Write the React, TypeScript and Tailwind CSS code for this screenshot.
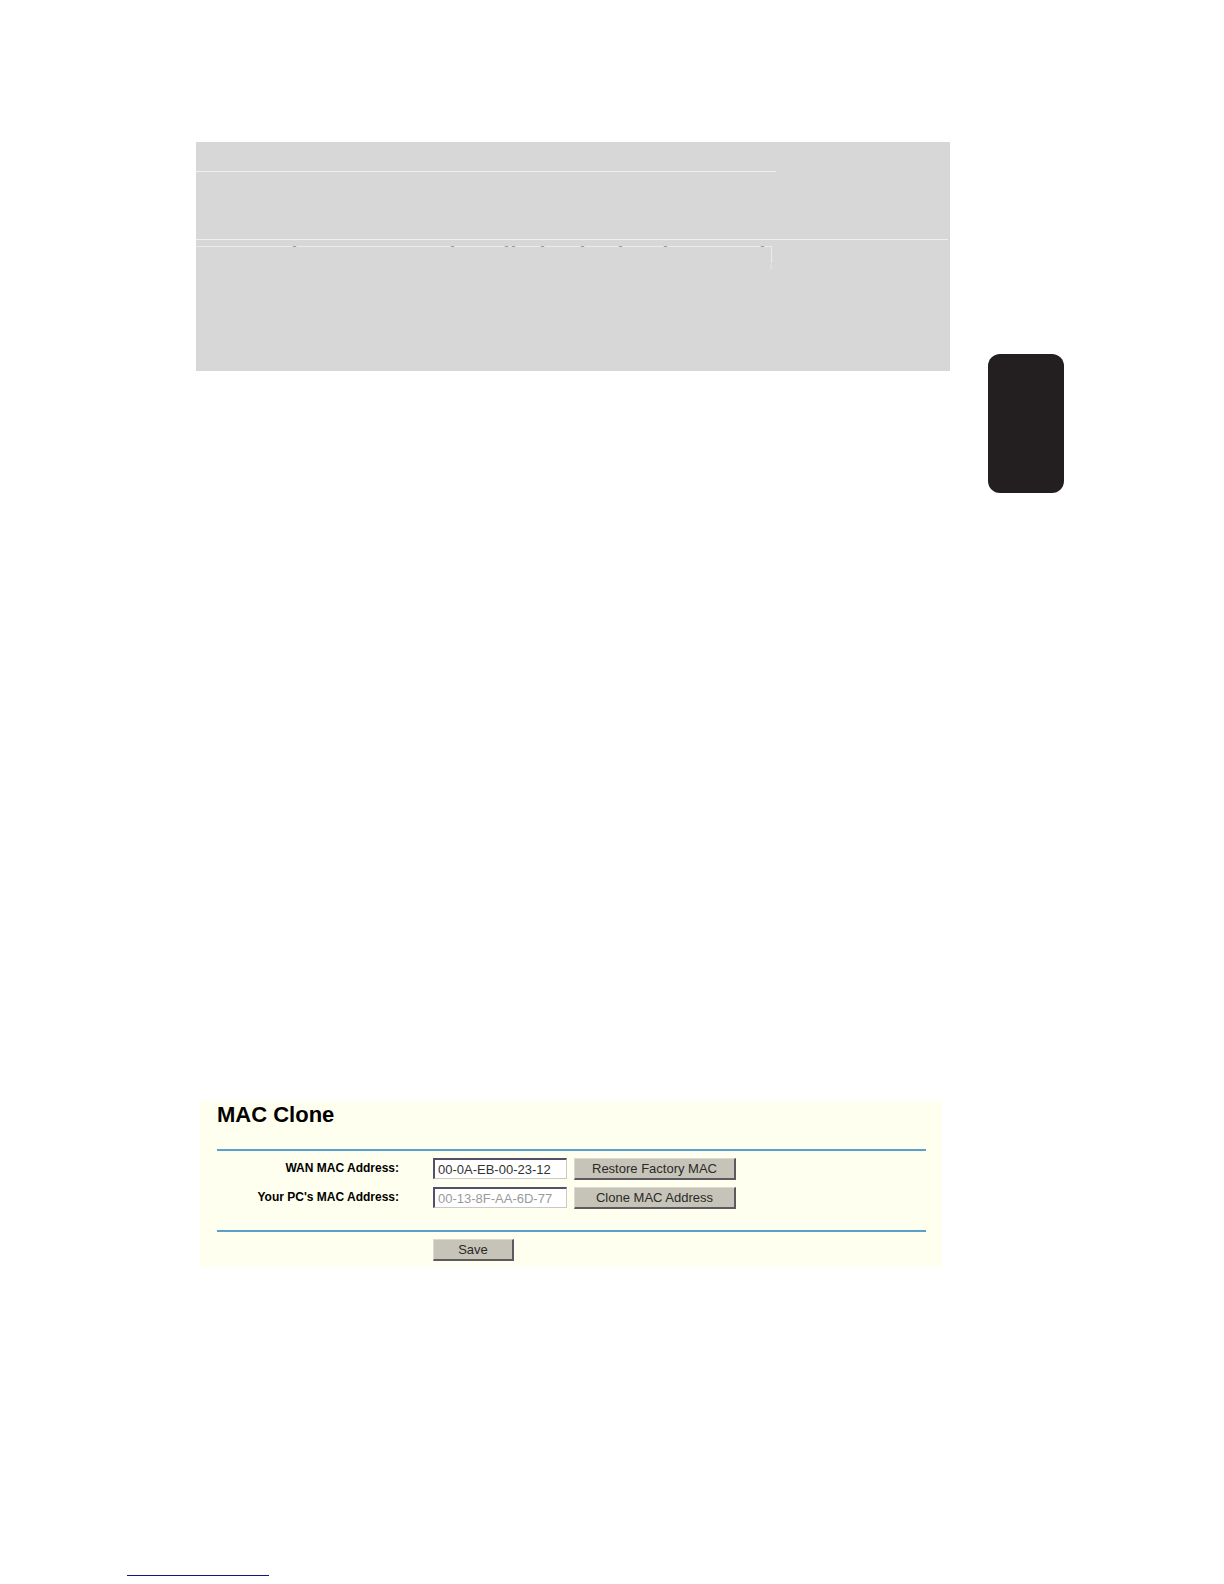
import React, { useState } from 'react';

const FACTORY_MAC = '00-0A-EB-00-23-12';
const PC_MAC = '00-13-8F-AA-6D-77';

// x positions of the small descender marks along the third rule
const MARKS = [98, 256, 310, 317, 346, 386, 424, 469, 566];

const BUTTON =
  'h-[22px] border-t border-l border-r-2 border-b-2 border-t-[#dcdad0] border-l-[#dcdad0] border-r-[#5c5a5e] border-b-[#5c5a5e] bg-[#c6c4b8] text-[13px] leading-[18px] text-[#2a2a28]';

const INPUT =
  'h-[21px] w-[134px] border-t-2 border-l-2 border-r border-b border-t-[#55506a] border-l-[#55506a] border-r-[#c9c8cc] border-b-[#c9c8cc] bg-white pl-[3px] text-[13px] leading-[18px] outline-none';

const NotePanel = () => (
  <section className="flex h-[229px] flex-1 flex-col bg-[#d7d7d7]">
    <div className="mr-[174px] h-[30px] border-b border-[#f0f0f0]" />
    <div className="mr-[2px] h-[68px] border-b border-[#f0f0f0]" />
    <svg className="mt-[5px] h-[26px] w-[576px]" viewBox="0 0 576 26" aria-hidden="true">
      <rect x="0" y="1" width="576" height="1" fill="#ebebeb" />
      <rect x="575" y="1" width="1" height="17" fill="#ebebeb" />
      <rect x="574" y="19" width="2" height="6" fill="#dedede" />
      {MARKS.map((x) => (
        <g key={x}>
          <rect x={x - 2} y="1" width="5" height="1" fill="#d7d7d7" />
          <rect x={x - 1} y="1" width="3" height="1" fill="#a0a0a0" />
        </g>
      ))}
    </svg>
  </section>
);

const MacCloneForm = () => {
  const [wanMac, setWanMac] = useState(FACTORY_MAC);

  return (
    <form
      onSubmit={(e) => e.preventDefault()}
      className="mt-[608px] mr-[122px] ml-1 bg-[#feffee] pt-[2px] pr-4 pb-[6px] pl-[17px]"
    >
      <h1 className="h-[46px] text-[22px] leading-6 font-bold text-black">MAC Clone</h1>

      <div className="flex h-[83px] flex-col gap-[7px] border-y-2 border-[#5aa0cc] pt-[7px]">
        <div className="flex h-[22px]">
          <label htmlFor="wan-mac" className="mr-[34px] w-[182px] text-right text-[12px] leading-5 font-bold text-black">
            WAN MAC Address:
          </label>
          <input
            id="wan-mac"
            type="text"
            value={wanMac}
            onChange={(e) => setWanMac(e.target.value)}
            className={`${INPUT} text-[#333333]`}
          />
          <button type="button" onClick={() => setWanMac(FACTORY_MAC)} className={`${BUTTON} ml-[7px] w-[162px]`}>
            Restore Factory MAC
          </button>
        </div>
        <div className="flex h-[22px]">
          <label htmlFor="pc-mac" className="mr-[34px] w-[182px] text-right text-[12px] leading-5 font-bold text-black">
            Your PC's MAC Address:
          </label>
          <input id="pc-mac" type="text" value={PC_MAC} disabled className={`${INPUT} text-[#9a9a9a]`} />
          <button type="button" onClick={() => setWanMac(PC_MAC)} className={`${BUTTON} ml-[7px] w-[162px]`}>
            Clone MAC Address
          </button>
        </div>
      </div>

      <button type="submit" className={`${BUTTON} mt-[7px] ml-[216px] block w-[81px]`}>
        Save
      </button>
    </form>
  );
};

const App = () => {
  return (
    <div className="bg-white font-['Liberation_Sans',Arial,sans-serif]">
      <main className="pt-[142px] pr-[160px] pl-[196px]">
        <div className="flex items-start gap-[38px]">
          <NotePanel />
          {/* Chapter thumb tab */}
          <aside className="mt-[212px] h-[139px] w-[76px] rounded-xl bg-[#231f20]" />
        </div>
        <MacCloneForm />
      </main>

      <footer className="mt-[308px] pb-2 pl-[127px]">
        <hr className="h-px w-[142px] border-0 bg-[#14148a]" />
      </footer>
    </div>
  );
};

export default App;
